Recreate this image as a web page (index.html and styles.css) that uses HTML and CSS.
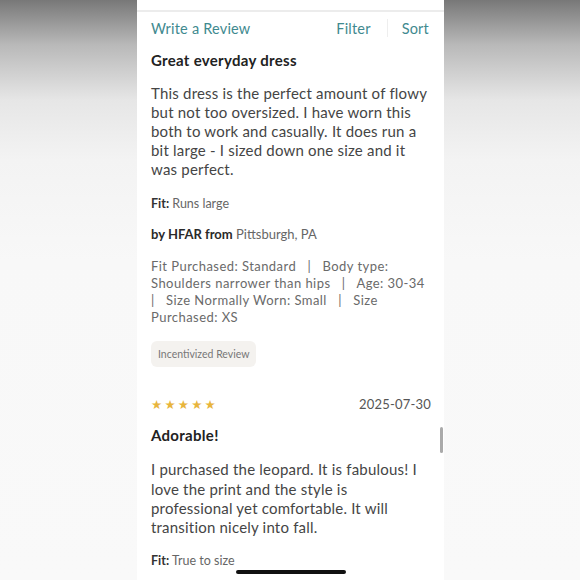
FILE: index.html
```html
<!DOCTYPE html>
<html>
<head>
<meta charset="utf-8">
<link rel="stylesheet" href="styles.css">
</head>
<body>
<div class="backdrop">
  <div class="side"></div>
  <main class="phone">
    <div class="topline"></div>
    <div class="toolbar">
      <span class="link">Write a Review</span>
      <div class="actions">
        <span class="link">Filter</span>
        <span class="sep"></span>
        <span class="link">Sort</span>
      </div>
    </div>
    <article class="review">
      <h2 class="title">Great everyday dress</h2>
      <p class="body">This dress is the perfect amount of flowy but not too oversized. I have worn this both to work and casually. It does run a bit large - I sized down one size and it was perfect.</p>
      <p class="fit"><b>Fit:</b> Runs large</p>
      <p class="author"><b>by HFAR from</b> Pittsburgh, PA</p>
      <p class="details">Fit Purchased: Standard   |   Body type: Shoulders narrower than hips   |   Age: 30‑34   |   Size Normally Worn: Small   |   Size Purchased: XS</p>
      <span class="pill">Incentivized Review</span>
    </article>
    <article class="review second">
      <div class="meta">
        <span class="stars">★★★★★</span>
        <span class="date">2025-07-30</span>
      </div>
      <h2 class="title">Adorable!</h2>
      <p class="body">I purchased the leopard. It is fabulous! I love the print and the style is professional yet comfortable. It will transition nicely into fall.</p>
      <p class="fit"><b>Fit:</b> True to size</p>
    </article>
    <div class="scrollbar"></div>
    <div class="home"></div>
  </main>
  <div class="side"></div>
</div>
</body>
</html>
```
FILE: styles.css
```css
html, body {
  margin: 0;
  padding: 0;
}
body {
  width: 580px;
  height: 580px;
  overflow: hidden;
  font-family: Lato, "Noto Sans", sans-serif;
  background: linear-gradient(to bottom, #787878 0px, #b9b9b9 45px, #e6e6e6 100px, #f3f3f3 160px, #f8f8f8 260px, #f9f9f9 580px);
}
.backdrop {
  display: grid;
  grid-template-columns: 137px 307px 1fr;
  height: 580px;
}
.phone {
  position: relative;
  background: #fff;
  height: 580px;
  overflow: hidden;
}
.topline {
  height: 10px;
  border-bottom: 2px solid #ececec;
  background: #fff;
}
.toolbar {
  display: flex;
  justify-content: space-between;
  align-items: center;
  padding: 0 15px 0 14px;
  height: 30px;
  margin-top: 1px;
}
.link {
  color: #3f8a8f;
  font-size: 14.5px;
  letter-spacing: 0.2px;
}
.actions {
  display: flex;
  align-items: center;
}
.sep {
  width: 1px;
  height: 18px;
  background: #eeeeee;
  margin: 0 14px 0 16px;
}
.review {
  padding: 0 13px 0 14px;
}
.title {
  margin: 7px 0 0;
  font-size: 15px;
  font-weight: 700;
  color: #222;
  letter-spacing: 0.3px;
  line-height: 20px;
}
.body {
  margin: 14px 0 0;
  font-size: 15px;
  line-height: 19.1px;
  color: #454545;
  letter-spacing: 0.2px;
}
.fit {
  margin: 16px 0 0;
  font-size: 12.5px;
  line-height: 18px;
  color: #666;
}
.fit b {
  color: #333;
  font-weight: 700;
}
.author {
  margin: 12px 0 0;
  font-size: 13px;
  line-height: 18px;
  color: #666;
}
.author b {
  color: #2a2a2a;
  font-weight: 700;
}
.details {
  margin: 15px 0 0;
  font-size: 13px;
  line-height: 17px;
  color: #6a6a6a;
  letter-spacing: 0.45px;
  white-space: pre-wrap;
}
.pill {
  display: inline-block;
  margin-top: 15px;
  padding: 6px 7px;
  background: #f4f2ef;
  border-radius: 6px;
  font-size: 10.5px;
  line-height: 14px;
  color: #777;
}
.second {
  margin-top: 28px;
}
.meta {
  display: flex;
  justify-content: space-between;
  align-items: center;
  height: 18px;
}
.stars {
  color: #e8b53c;
  font-size: 12.5px;
  letter-spacing: 2.2px;
  font-family: "DejaVu Sans", sans-serif;
}
.date {
  font-size: 13px;
  color: #555;
  letter-spacing: 0.2px;
}
.second .title {
  margin-top: 12px;
}
.second .body {
  margin-top: 15px;
}
.second .fit {
  margin-top: 15px;
}
.scrollbar {
  position: absolute;
  left: 303px;
  top: 427px;
  width: 3px;
  height: 26px;
  border-radius: 2px;
  background: #aaa;
}
.home {
  position: absolute;
  left: 99px;
  top: 570px;
  width: 110px;
  height: 4px;
  border-radius: 2px;
  background: #111;
}
```
